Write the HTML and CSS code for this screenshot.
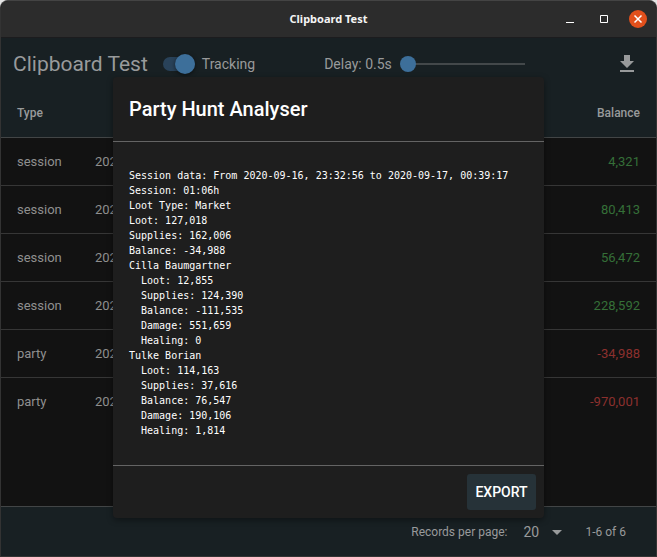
FILE: index.html
```html
<!DOCTYPE html>
<html lang="en">
<head>
<meta charset="utf-8">
<title>Clipboard Test</title>
<link rel="stylesheet" href="styles.css">
</head>
<body>
<div class="window">
  <header class="titlebar">
    <span class="titlebar-text">Clipboard Test</span>
    <div class="window-controls">
      <button class="control" type="button" aria-label="Minimize"><svg viewBox="0 0 18 18"><path d="M5 12.5h8" stroke="#fff"/></svg></button>
      <button class="control" type="button" aria-label="Maximize"><svg viewBox="0 0 18 18"><path d="M5.5 5.5h7v7h-7z" fill="none" stroke="#fff"/></svg></button>
      <button class="control close" type="button" aria-label="Close"><svg viewBox="0 0 18 18"><path d="M5.5 5.5l7 7m0-7l-7 7" stroke="#fff" stroke-width="1.5"/></svg></button>
    </div>
  </header>

  <div class="client">
    <div class="page">
      <div class="toolbar">
        <h1 class="app-title">Clipboard Test</h1>
        <label class="tracking"><input class="switch" type="checkbox" role="switch" checked>Tracking</label>
        <div class="delay">
          <label for="delay">Delay: 0.5s</label>
          <input class="slider" id="delay" type="range" min="0" max="10" value="0">
        </div>
        <button class="download" type="button" aria-label="Download"><svg viewBox="0 0 24 24"><path fill="currentColor" d="M19 9h-4V3H9v6H5l7 7 7-7zM5 18v2h14v-2H5z"/></svg></button>
      </div>

      <div class="records">
        <table class="table">
          <thead><tr><th class="type">Type</th><th></th><th class="amount">Balance</th></tr></thead>
          <tbody>
            <tr><td>session</td><td>2020</td><td class="amount gain">4,321</td></tr>
            <tr><td>session</td><td>2020</td><td class="amount gain">80,413</td></tr>
            <tr><td>session</td><td>2020</td><td class="amount gain">56,472</td></tr>
            <tr><td>session</td><td>2020</td><td class="amount gain">228,592</td></tr>
            <tr><td>party</td><td>2020</td><td class="amount loss">-34,988</td></tr>
            <tr><td>party</td><td>2020</td><td class="amount loss">-970,001</td></tr>
          </tbody>
        </table>
      </div>

      <footer class="pager">
        <label for="per-page">Records per page:</label>
        <span class="select-wrap">
          <select class="select" id="per-page"><option>20</option></select>
          <svg class="caret" viewBox="0 0 24 24"><path fill="currentColor" d="M7 10l5 5 5-5z"/></svg>
        </span>
        <span>1-6 of 6</span>
      </footer>
    </div>

    <div class="overlay">
      <section class="dialog" role="dialog" aria-labelledby="dialog-title">
        <h2 class="dialog-title" id="dialog-title">Party Hunt Analyser</h2>
        <pre class="report">Session data: From 2020-09-16, 23:32:56 to 2020-09-17, 00:39:17
Session: 01:06h
Loot Type: Market
Loot: 127,018
Supplies: 162,006
Balance: -34,988
Cilla Baumgartner
  Loot: 12,855
  Supplies: 124,390
  Balance: -111,535
  Damage: 551,659
  Healing: 0
Tulke Borian
  Loot: 114,163
  Supplies: 37,616
  Balance: 76,547
  Damage: 190,106
  Healing: 1,814</pre>
        <div class="dialog-actions"><button class="export" type="button">EXPORT</button></div>
      </section>
    </div>
  </div>
</div>
</body>
</html>
```
FILE: styles.css
```css
* { box-sizing: border-box; }

body {
  margin: 0;
  background: #e4e4e4;
  color: #989a9b;
  font: 14px/20px Roboto, sans-serif;
}

button { padding: 0; border: 0; background: none; color: inherit; font: inherit; }
svg { display: block; }

.window {
  display: flex;
  flex-direction: column;
  min-height: 100vh;
  border: 1px solid #333;
  border-top-color: #444;
  border-radius: 8px 8px 0 0;
  background: #121212;
  overflow: hidden;
}

.titlebar {
  display: grid;
  grid-template-columns: 1fr auto 1fr;
  align-items: center;
  height: 37px;
  border-bottom: 1px solid #1c1c1e;
  background: #2c2c2c;
}
.titlebar-text { grid-column: 2; color: #f4f4f4; font: bold 11px/20px "Noto Sans", sans-serif; }
.window-controls { display: flex; justify-content: flex-end; gap: 16px; padding-right: 9px; }
.control { width: 18px; height: 18px; border-radius: 50%; }
.close { background: #e2501c; }

.client { display: grid; flex: 1; }
.page, .overlay { grid-area: 1 / 1; }
.page { display: flex; flex-direction: column; min-width: 0; }

.toolbar { display: flex; align-items: center; height: 51px; padding: 0 17px 0 12px; background: #182023; }
.app-title { margin: 0; font-size: 21px; font-weight: 400; }
.tracking { display: flex; align-items: center; gap: 7px; margin-left: 15px; }
.switch {
  display: flex;
  align-items: center;
  appearance: none;
  width: 32px;
  height: 14px;
  margin: 0;
  border-radius: 7px;
  background: #294259;
}
.switch::before { content: ""; flex: none; width: 20px; height: 20px; margin-left: 12px; border-radius: 50%; background: #3d6f9a; box-shadow: 0 1px 4px #0008; }
.delay { display: flex; align-items: center; gap: 8px; margin-left: 69px; }
.slider { appearance: none; width: 125px; height: 20px; margin: 0; background: none; }
.slider::-webkit-slider-runnable-track { height: 2px; background: linear-gradient(90deg, transparent 8px, #43484a 8px); }
.slider::-webkit-slider-thumb { appearance: none; width: 16px; height: 16px; margin-top: -7px; border-radius: 50%; background: #3d6f9a; }
.download { width: 24px; height: 24px; margin-left: auto; }

.records { flex: 1; border-bottom: 1px solid #424546; }
.table { width: 100%; border-collapse: separate; border-spacing: 0; font-size: 13px; }
.table th, .table td { height: 48px; padding: 0 16px; text-align: left; }
.table th { height: 49px; border-bottom: 1px solid #424546; background: #182023; font-size: 12px; font-weight: 500; }
.table td { border-bottom: 1px solid #363636; color: #8f8f8f; }
.table tr:last-child td { border-bottom: 0; }
.table .type { width: 78px; }
.table .amount { text-align: right; }
.table .gain { color: #356f38; }
.table .loss { color: #8c302e; }

.pager { display: flex; align-items: center; justify-content: flex-end; height: 49px; padding: 0 30px 0 16px; background: #182023; font-size: 12px; }
.select-wrap { display: flex; align-items: center; margin: 0 16px; }
.select { appearance: none; width: 22px; padding: 0; border: 0; background: none; color: inherit; font: 14px/20px Roboto, sans-serif; }
.caret { width: 24px; height: 24px; }

.overlay { display: grid; place-items: center; z-index: 1; }
.dialog { width: 431px; max-width: 100%; border-radius: 4px; background: #1e1e1e; color: #fff; box-shadow: 0 2px 6px #0006; }
.dialog-title { margin: 0; padding: 16px; border-bottom: 1px solid #646464; font-size: 20px; font-weight: 500; line-height: 32px; }
.report { margin: 0; padding: 26px 16px 27px; border-bottom: 1px solid #646464; font: 10px/15px "DejaVu Sans Mono", monospace; }
.dialog-actions { display: flex; justify-content: flex-end; padding: 8px; }
.export { min-width: 69px; height: 36px; padding: 0 8px; border-radius: 3px; background: #263238; font-weight: 500; }
```
